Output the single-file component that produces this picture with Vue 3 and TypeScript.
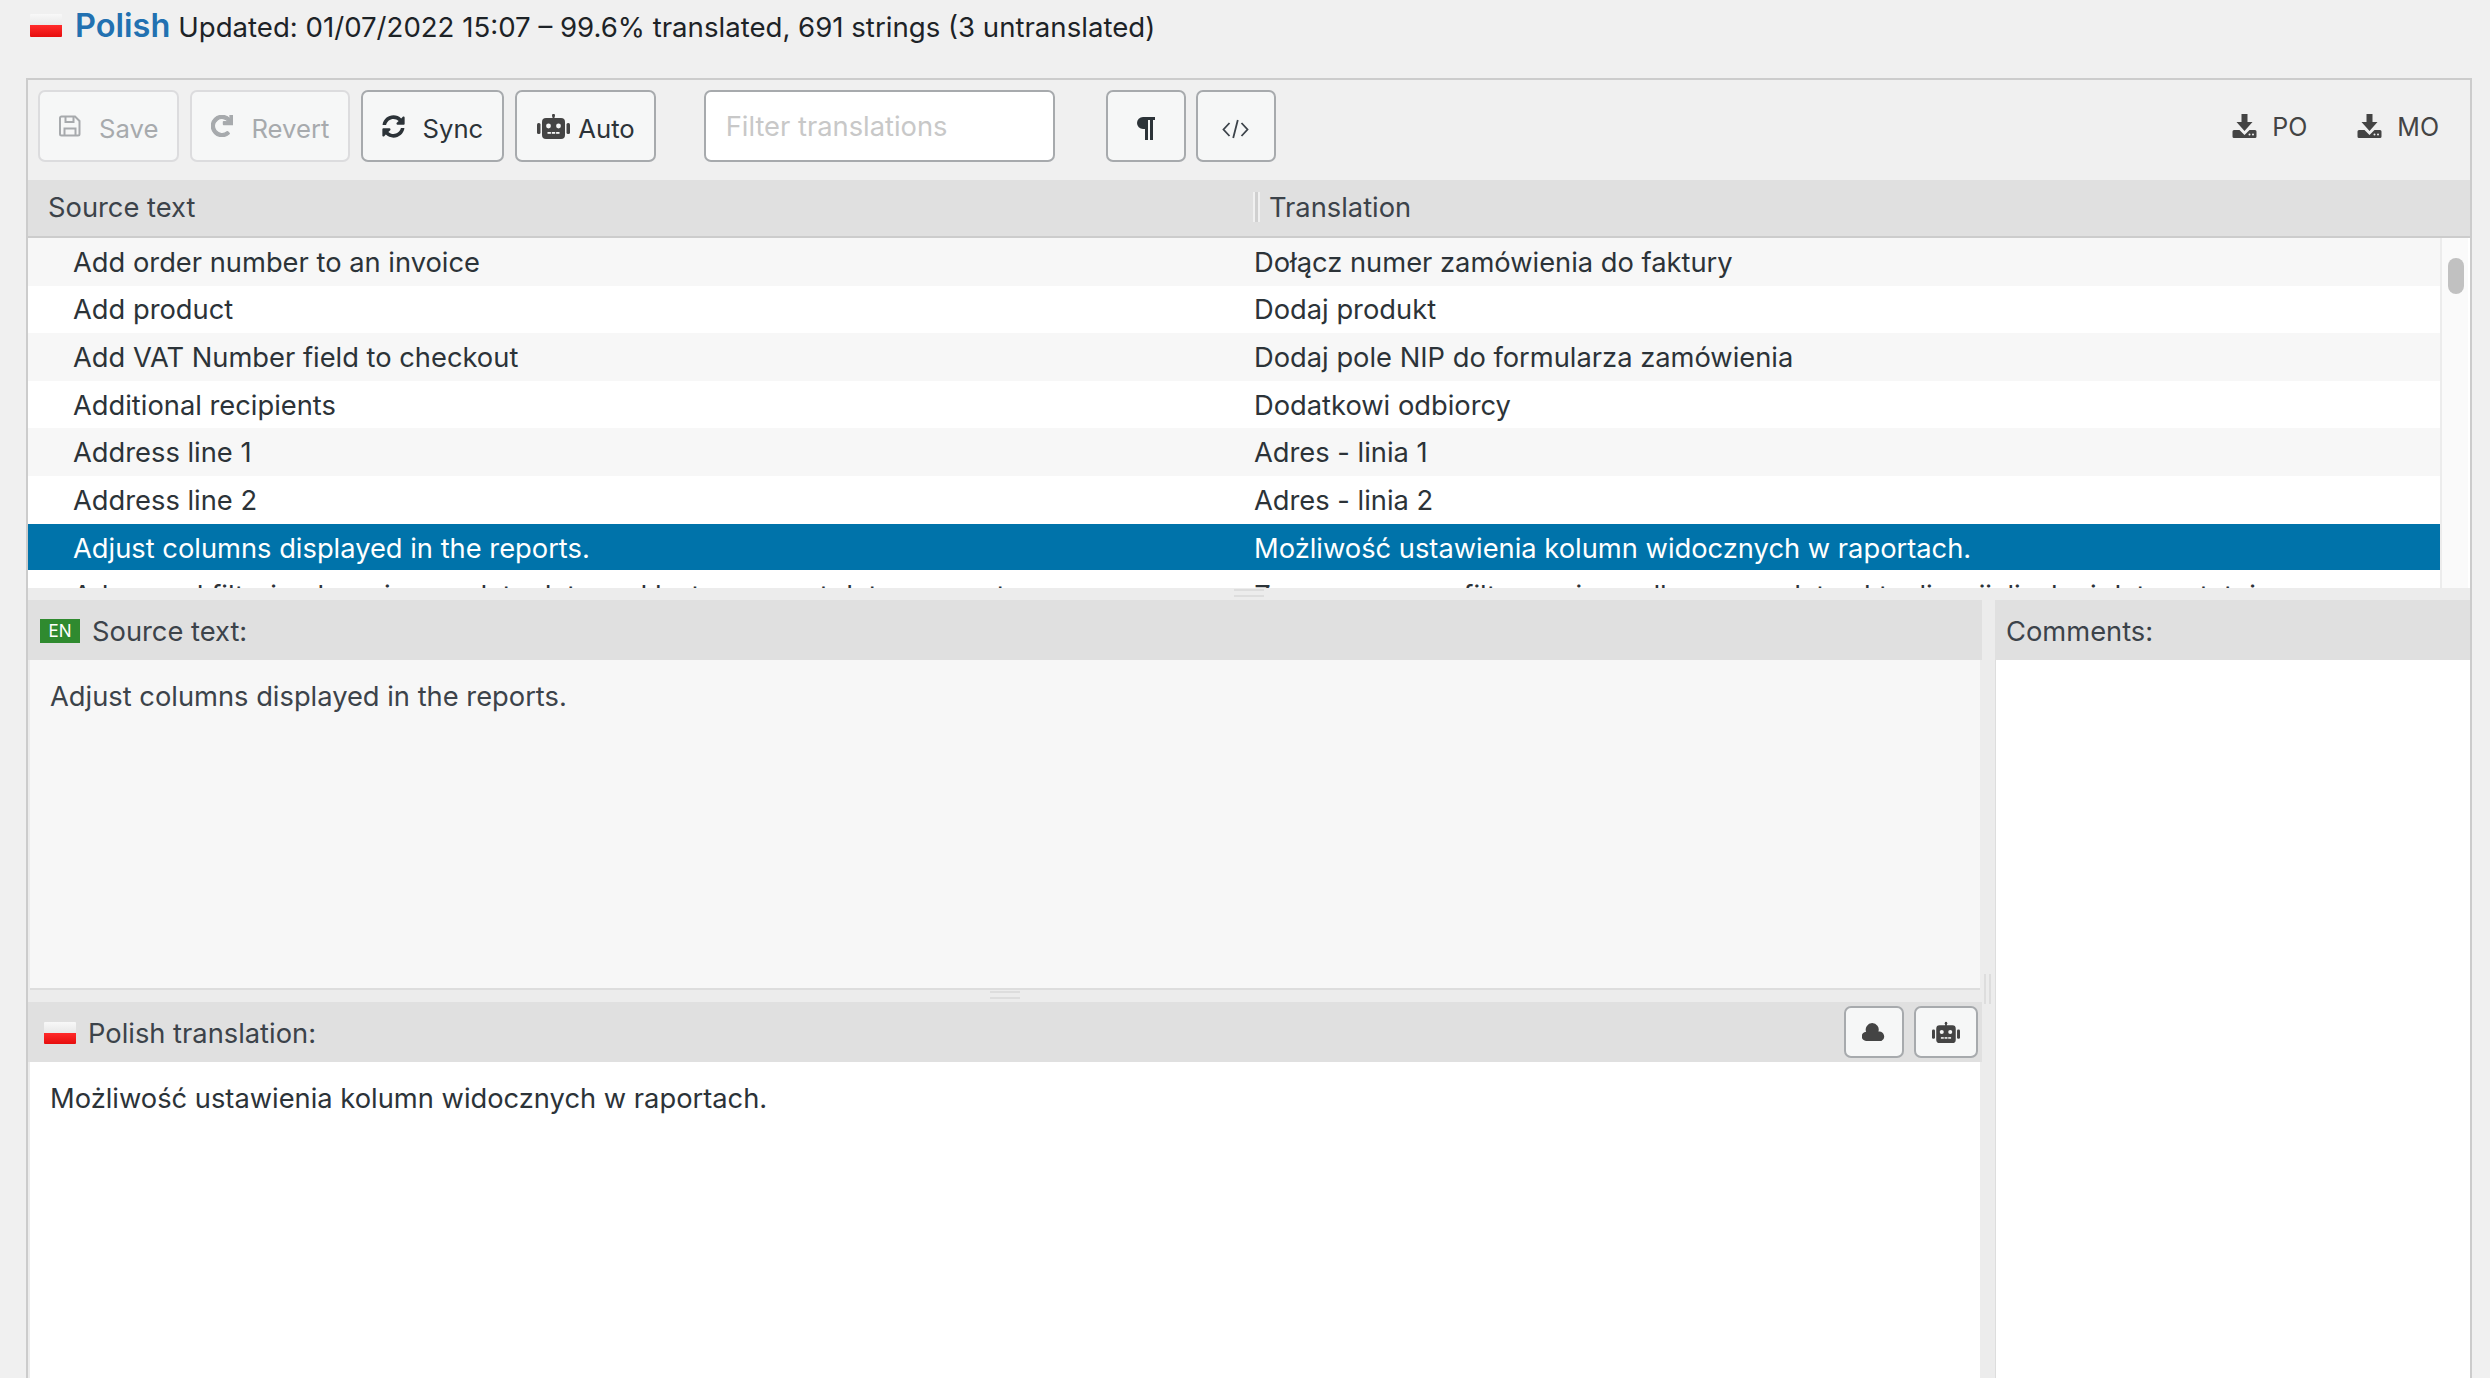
<script setup lang="ts">
interface Row {
  source: string
  target: string
  selected?: boolean
}

const rows: Row[] = [
  { source: 'Add order number to an invoice', target: 'Dołącz numer zamówienia do faktury' },
  { source: 'Add product', target: 'Dodaj produkt' },
  { source: 'Add VAT Number field to checkout', target: 'Dodaj pole NIP do formularza zamówienia' },
  { source: 'Additional recipients', target: 'Dodatkowi odbiorcy' },
  { source: 'Address line 1', target: 'Adres - linia 1' },
  { source: 'Address line 2', target: 'Adres - linia 2' },
  { source: 'Adjust columns displayed in the reports.', target: 'Możliwość ustawienia kolumn widocznych w raportach.', selected: true },
  { source: 'Advanced filtering by price, update date and last comment date, amount', target: 'Zaawansowane filtrowanie według ceny, daty aktualizacji, liczby i daty ostatniego' },
]

const robotEyes = [11.5, 21.5]
const robotMouth = [10.5, 14.8, 19.1]
</script>

<template>
  <div class="page">
    <h1 class="title">
      <span class="flag"></span>
      <span class="lang">Polish</span>
      <span class="meta">Updated: 01/07/2022 15:07 – 99.6% translated, 691 strings (3 untranslated)</span>
    </h1>

    <div class="editor">
      <div class="toolbar">
        <button class="btn off">
          <svg class="ico" width="22" height="22" viewBox="0 0 22 22" fill="none" stroke="currentColor" stroke-width="2">
            <path d="M2.5 1.5h13.5l4.500 4.500v13a1.500 1.500 0 0 1-1.500 1.500h-16.500a1.500 1.500 0 0 1-1.500-1.500v-16a1.500 1.500 0 0 1 1.500-1.500z" />
            <path d="M6.500 1.500v5.500h8v-5.500M5.500 20.500v-7h11v7" />
          </svg>
          Save
        </button>
        <button class="btn off">
          <svg class="ico" width="22" height="22" viewBox="0 0 512 512" fill="currentColor" stroke="currentColor" stroke-width="28">
            <path d="M500.33 0h-47.41a12 12 0 0 0-12 12.57l4 82.76A247.42 247.42 0 0 0 256 8C119.34 8 7.9 119.53 8 256.19 8.1 393.07 119.1 504 256 504a247.1 247.1 0 0 0 166.18-63.91 12 12 0 0 0 .48-17.43l-34-34a12 12 0 0 0-16.38-.55A176 176 0 1 1 402.1 157.8l-101.53-4.87a12 12 0 0 0-12.57 12v47.41a12 12 0 0 0 12 12h200.33a12 12 0 0 0 12-12V12a12 12 0 0 0-12-12z" />
          </svg>
          Revert
        </button>
        <button class="btn sync">
          <svg class="ico" width="23" height="23" viewBox="0 0 512 512" fill="currentColor">
            <path d="M370.72 133.28C339.458 104.008 298.888 87.962 255.848 88c-77.458.068-144.328 53.178-162.791 126.85-1.344 5.363-6.122 9.15-11.651 9.15H24.103c-7.498 0-13.194-6.807-11.807-14.176C33.933 94.924 134.813 8 256 8c66.448 0 126.791 26.136 171.315 68.685L463.03 40.97C478.149 25.851 504 36.559 504 57.941V192c0 13.255-10.745 24-24 24H345.941c-21.382 0-32.09-25.851-16.971-40.971l41.75-41.749zM32 296h134.059c21.382 0 32.09 25.851 16.971 40.971l-41.75 41.75c31.262 29.273 71.835 45.319 114.876 45.28 77.418-.07 144.315-53.144 162.787-126.849 1.344-5.363 6.122-9.15 11.651-9.15h57.304c7.498 0 13.194 6.807 11.807 14.176C478.067 417.076 377.187 504 256 504c-66.448 0-126.791-26.136-171.315-68.685L48.97 471.03C33.851 486.149 8 475.441 8 454.059V320c0-13.255 10.745-24 24-24z" />
          </svg>
          Sync
        </button>
        <button class="btn auto">
          <svg class="ico" width="33" height="25" viewBox="0 0 33 25">
            <g fill="#444">
              <rect x="15.500" y="0" width="2" height="5" />
              <circle cx="16.500" cy="1.500" r="1.500" />
              <rect x="5" y="4" width="23" height="21" rx="4" />
              <rect x="0" y="9" width="3.500" height="11" rx="1.500" />
              <rect x="29.500" y="9" width="3.500" height="11" rx="1.500" />
            </g>
            <circle v-for="x in robotEyes" :key="x" :cx="x" cy="12" r="2.400" fill="#f6f7f7" />
            <rect v-for="x in robotMouth" :key="x" :x="x" y="18" width="3.400" height="1.800" fill="#f6f7f7" />
          </svg>
          Auto
        </button>

        <input class="filter" type="text" placeholder="Filter translations" />

        <div class="view-btns">
          <button class="btn square">
            <svg width="19" height="23" viewBox="0 0 19 23" fill="#2c3338">
              <path d="M7 0H19V3H17V23H14V3H12V23H9V12H7A6 6 0 0 1 7 0Z" />
            </svg>
          </button>
          <button class="btn square">
            <svg class="code-ico" width="27" height="20" viewBox="0 0 27 20" fill="none" stroke="#3c434a" stroke-width="1.800">
              <path d="M7.500 4L1.500 10.500L7.500 17M19.500 4L25.500 10.500L19.500 17M15.800 1L11.200 19" />
            </svg>
          </button>
        </div>

        <div class="downloads">
          <a v-for="kind in ['PO', 'MO']" :key="kind" class="dl">
            <svg class="dl-ico" width="25" height="24" viewBox="0 0 24 24">
              <path fill="#444" d="M9 0h6v8h5l-8 9-8-9h5z" />
              <path fill="#444" d="M1.500 16H7l5 5 5-5h5.500a1.500 1.500 0 0 1 1.500 1.500v5a1.500 1.500 0 0 1-1.500 1.500h-21A1.500 1.500 0 0 1 0 22.500v-5A1.500 1.500 0 0 1 1.500 16z" />
              <circle cx="17" cy="20.500" r="1" fill="#f0f0f0" />
              <circle cx="20.500" cy="20.500" r="1" fill="#f0f0f0" />
            </svg>
            {{ kind }}
          </a>
        </div>
      </div>

      <div class="list-head">
        <div class="head-source">Source text</div>
        <div class="head-target"><span class="grip-v small"></span>Translation</div>
      </div>

      <div class="list">
        <div class="rows">
          <div v-for="row in rows" :key="row.source" class="row" :class="{ selected: row.selected }">
            <div class="cell">{{ row.source }}</div>
            <div class="cell">{{ row.target }}</div>
          </div>
        </div>
        <div class="track"><div class="thumb"></div></div>
      </div>

      <div class="split-h"><span class="grip-h"></span></div>

      <div class="panes">
        <div class="left">
          <section class="pane source">
            <header class="pane-head">
              <span class="badge">EN</span>
              <span>Source text:</span>
            </header>
            <div class="pane-body">Adjust columns displayed in the reports.</div>
          </section>
          <div class="split-h"><span class="grip-h"></span></div>
          <section class="pane target">
            <header class="pane-head">
              <span class="flag small"></span>
              <span>Polish translation:</span>
              <div class="pane-tools">
                <button class="btn tool">
                  <svg width="24" height="18" viewBox="0 0 24 18" fill="#444">
                    <path d="M4.600 18A4.600 4.600 0 0 1 4.100 8.800A6.500 6.500 0 1 1 16.400 8.600A5 5 0 0 1 19.400 18Z" />
                  </svg>
                </button>
                <button class="btn tool wide">
                  <svg width="28" height="25" viewBox="0 0 33 25">
                    <g fill="#444">
                      <rect x="15.500" y="0" width="2" height="5" />
                      <circle cx="16.500" cy="1.500" r="1.500" />
                      <rect x="5" y="4" width="23" height="21" rx="4" />
                      <rect x="0" y="9" width="3.500" height="11" rx="1.500" />
                      <rect x="29.500" y="9" width="3.500" height="11" rx="1.500" />
                    </g>
                    <circle v-for="x in robotEyes" :key="x" :cx="x" cy="12" r="2.400" fill="#f6f7f7" />
                    <rect v-for="x in robotMouth" :key="x" :x="x" y="18" width="3.400" height="1.800" fill="#f6f7f7" />
                  </svg>
                </button>
              </div>
            </header>
            <div class="pane-body">Możliwość ustawienia kolumn widocznych w raportach.</div>
          </section>
        </div>

        <div class="split-v"><span class="grip-v"></span></div>

        <section class="pane comments">
          <header class="pane-head"><span>Comments:</span></header>
          <div class="pane-body"></div>
        </section>
      </div>
    </div>
  </div>
</template>

<style>
html, body { height: 100%; overflow: hidden; background: #f0f0f0; }
</style>

<style scoped>
.page {
  height: 1378px;
  overflow: hidden;
  display: flex;
  flex-direction: column;
  padding: 0 18px 0 26px;
  box-sizing: border-box;
  font-family: Inter, "Noto Sans", "Liberation Sans", sans-serif;
  font-size: 27.3px;
  color: #3c434a;
  background: #f0f0f0;
}
.title {
  height: 78px;
  flex: none;
  margin: 0;
  padding: 14px 0 0 4px;
  box-sizing: border-box;
  display: flex;
  align-items: flex-start;
  font-weight: 400;
  font-size: 27.6px;
}
.flag {
  width: 32px;
  height: 23px;
  flex: none;
  border-radius: 1px;
  background: linear-gradient(#f8f8f8 0, #e9e9e9 48%, #ff2a2a 50%, #e60d0d 100%);
}
.flag.small { margin: 2px 12px 0 0; height: 22px; }
.lang {
  margin: -7px 8px 0 13px;
  font-size: 32.5px;
  font-weight: 600;
  line-height: 38px;
  color: #2271b1;
}
.meta { line-height: 26px; color: #1d2327; }

.editor {
  flex: 1;
  min-height: 0;
  display: flex;
  flex-direction: column;
  border: 2px solid #ccc;
  border-bottom: 0;
}
.toolbar {
  height: 100px;
  flex: none;
  display: flex;
  align-items: center;
  padding: 0 31px 8px 10px;
  box-sizing: border-box;
  gap: 11px;
}
.btn {
  height: 72px;
  padding: 4px 19px 0;
  box-sizing: border-box;
  display: flex;
  align-items: center;
  gap: 18px;
  border: 2.500px solid #a7aaad;
  border-radius: 7px;
  background: #f6f7f7;
  font: inherit;
  font-size: 25.7px;
  color: #2c3338;
}
.btn.off { color: #a7aaad; border-color: #dcdcde; }
.btn.sync { gap: 17px; }
.btn.auto { gap: 8px; padding: 4px 19px 0 20px; }
.ico { margin-top: -4px; flex: none; }
.btn.square { width: 80px; padding: 4px 0 0; justify-content: center; }
.code-ico { margin-top: 2px; }
.filter {
  width: 351px;
  height: 72px;
  margin-left: 37px;
  padding: 0 20px;
  box-sizing: border-box;
  border: 2.500px solid #a7aaad;
  border-radius: 7px;
  background: #fff;
  font: inherit;
  outline: none;
}
.filter::placeholder { color: #c8c8c8; opacity: 1; }
.view-btns { display: flex; gap: 10px; margin-left: 40px; }
.downloads { margin: 2px 0 0 auto; display: flex; gap: 50px; font-size: 25px; }
.dl { display: flex; align-items: center; gap: 15px; color: #444; }
.dl-ico { margin-top: -3px; }

.list-head {
  height: 58px;
  flex: none;
  display: grid;
  grid-template-columns: 1225px 1fr;
  align-items: center;
  background: #e0e0e0;
  border-bottom: 2px solid #ccc;
  box-sizing: border-box;
}
.head-source { padding: 0 0 2px 20px; }
.head-target { display: flex; align-items: center; gap: 9px; padding-bottom: 2px; }
.list { height: 350px; flex: none; display: flex; overflow: hidden; background: #fff; padding-right: 2px; box-sizing: border-box; }
.rows { flex: 1; min-width: 0; }
.row {
  height: 47.600px;
  display: grid;
  grid-template-columns: 1226px 1fr;
  align-items: center;
  white-space: nowrap;
  color: #2c3338;
}
.row:nth-child(odd) { background: #f7f7f7; }
.row.selected {
  box-sizing: border-box;
  border-bottom: 1.600px solid #fff;
  background: #0073aa;
  color: #fff;
}
.row .cell { overflow: hidden; padding-top: 1px; }
.row.selected .cell { padding-top: 3px; }
.row .cell:first-child { padding-left: 45px; }
.track {
  width: 26px;
  flex: none;
  border-left: 2px solid #ececec;
  background: #fafafa;
  position: relative;
}
.thumb {
  position: absolute;
  top: 20px;
  left: 6px;
  width: 16px;
  height: 36px;
  border-radius: 8px;
  background: #c1c1c1;
}

.split-h {
  height: 12px;
  flex: none;
  display: flex;
  justify-content: center;
  align-items: flex-start;
  background: #ececec;
}
.grip-h {
  width: 30px;
  height: 8px;
  margin-top: 1px;
  border-top: 2px solid #ddd;
  border-bottom: 2px solid #ddd;
  box-sizing: border-box;
}
.panes { flex: 1; min-height: 0; display: flex; background: #ececec; }
.left { width: 1954px; flex: none; display: flex; flex-direction: column; }
.pane { display: flex; flex-direction: column; }
.source { height: 390px; flex: none; }
.target { flex: 1; min-height: 0; }
.comments { flex: 1; min-width: 0; }
.pane-head {
  height: 60px;
  flex: none;
  display: flex;
  align-items: center;
  padding-left: 16px;
  box-sizing: border-box;
  background: #e0e0e0;
}
.pane-head > span { margin-top: 2px; }
.source .pane-head { padding-left: 12px; }
.target .pane-head { padding-right: 4px; }
.comments .pane-head { padding-left: 11px; }
.pane-body {
  flex: 1;
  min-height: 0;
  margin: 0 2px;
  padding: 19px 20px;
  line-height: 36px;
  background: #fff;
  color: #2c3338;
}
.source .pane-body { background: #f7f7f7; border-bottom: 2px solid #ddd; color: #3c434a; }
.comments .pane-body { margin: 0; border-left: 1px solid #ddd; }
.badge {
  width: 40px;
  height: 24px;
  margin-right: 12px;
  display: flex;
  align-items: center;
  justify-content: center;
  background: #2f8a2f;
  color: #fff;
  font-size: 17px;
}
.pane-tools { margin-left: auto; display: flex; gap: 10px; }
.btn.tool { width: 60px; height: 52px; padding: 0; justify-content: center; }
.btn.tool.wide { width: 64px; }
.split-v { width: 13px; flex: none; padding-top: 374px; padding-left: 2px; box-sizing: border-box; }
.grip-v {
  display: block;
  width: 7px;
  height: 30px;
  border-left: 2px solid #ddd;
  border-right: 2px solid #ddd;
  box-sizing: border-box;
}
.grip-v.small { flex: none; border-color: #f0f0f0; background: #d0d0d0; }
</style>
